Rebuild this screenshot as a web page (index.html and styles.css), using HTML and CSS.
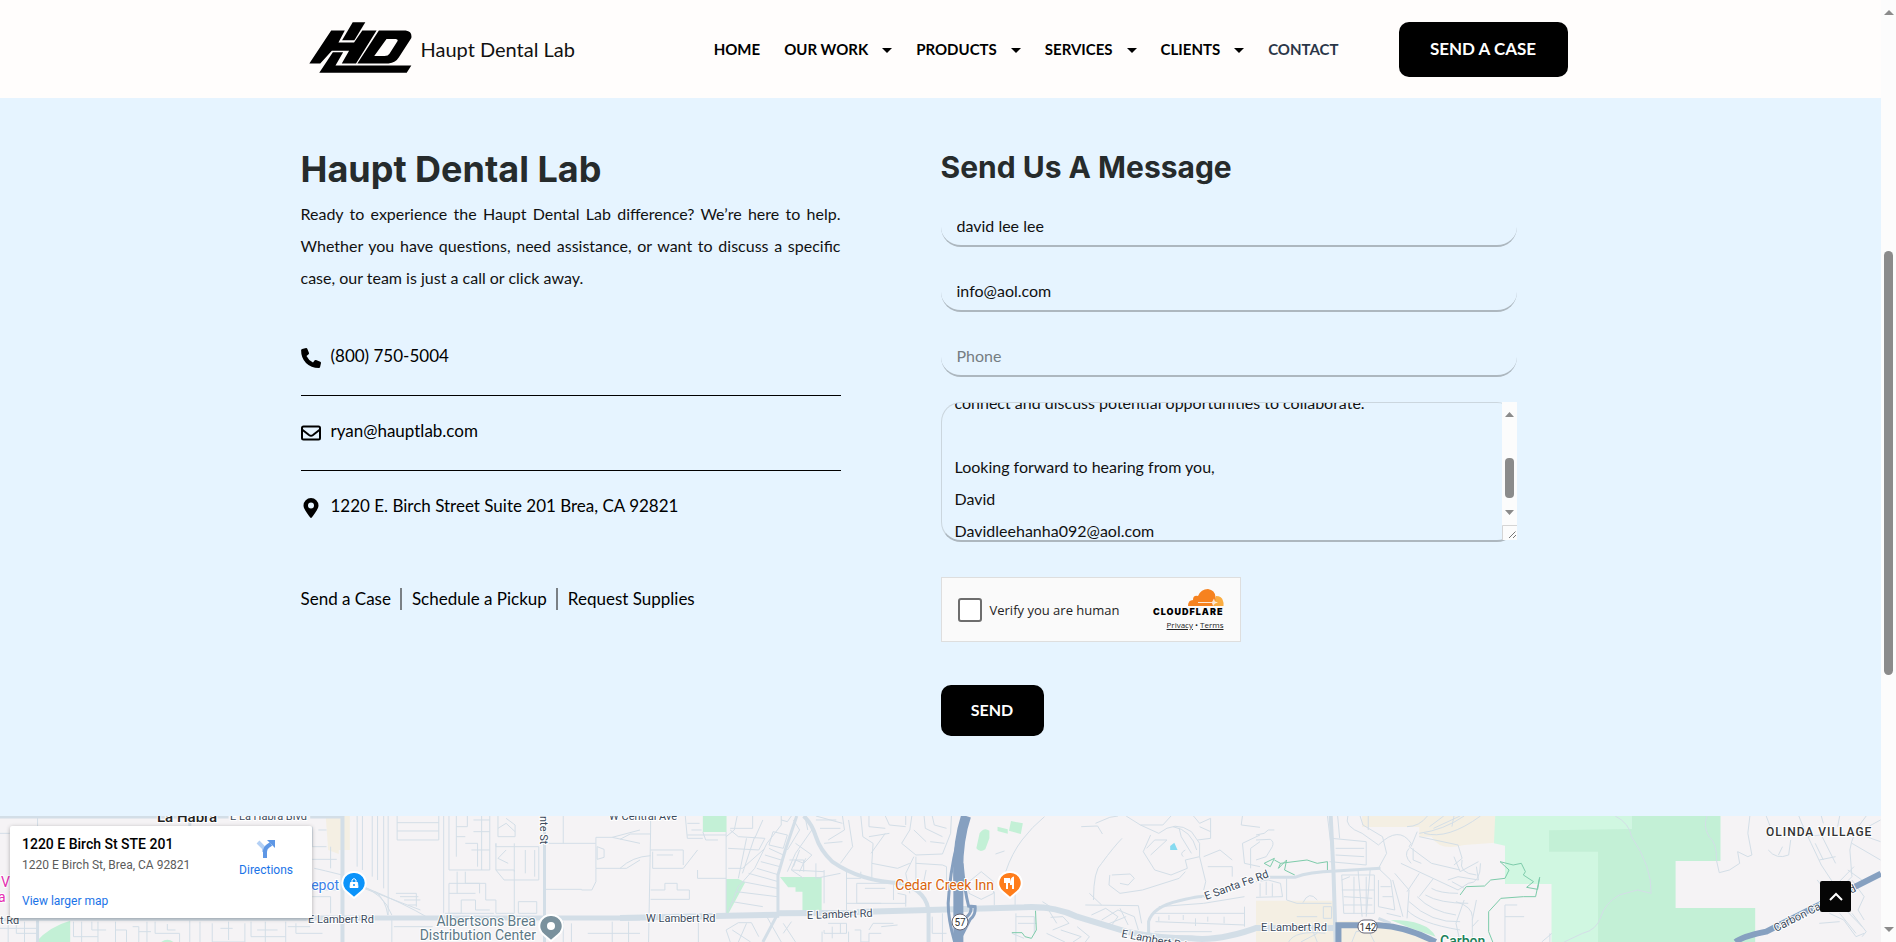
FILE: index.html
```html
<!DOCTYPE html>
<html lang="en">
<head>
<meta charset="utf-8">
<title>Contact - Haupt Dental Lab</title>
<link rel="stylesheet" href="styles.css">
</head>
<body>
<div class="window">
<div class="page">
  <header class="site-header">
    <div class="container header-row">
      <a class="logo" href="#">
        <svg class="logo-mark" viewBox="27 24 309 154" aria-hidden="true">
          <path d="M158 25H196L163 79H126Z"/>
          <path d="M93 50H134L115 86H162L187 50H230L168 149H125L147 111H95L60 149H27Z"/>
          <path fill-rule="evenodd" d="M237 50H318Q338 53 335 72L298 130Q288 147 266 149H172ZM260 75L223 127H254Q265 127 269 120L292 84Q297 76 288 75Z"/>
          <path d="M98 115H129L106 155H335L321 177H57Z"/>
        </svg>
        <span class="logo-text">Haupt Dental Lab</span>
      </a>
      <nav class="nav">
        <a href="#">HOME</a>
        <a href="#" class="has-menu">OUR WORK</a>
        <a href="#" class="has-menu">PRODUCTS</a>
        <a href="#" class="has-menu">SERVICES</a>
        <a href="#" class="has-menu">CLIENTS</a>
        <a href="#" class="current">CONTACT</a>
      </nav>
      <a class="button case-button" href="#">SEND A CASE</a>
    </div>
  </header>

  <main class="contact">
    <div class="container columns">
      <section class="info">
        <h1>Haupt Dental Lab</h1>
        <p class="intro">Ready to experience the Haupt Dental Lab difference? We’re here to help. Whether you have questions, need assistance, or want to discuss a specific case, our team is just a call or click away.</p>
        <ul class="details">
          <li><a href="#"><svg viewBox="0 0 20 20" aria-hidden="true"><path d="M1.200 0.900 5.100 0Q5.900-.1 6.300.7L8 5Q8.200 5.700 7.600 6.300L5.500 8Q7.500 12.300 12 14.500L13.700 12.300Q14.200 11.800 15 12L19.300 13.800Q20.100 14.200 20 15L19.100 18.900Q18.900 19.900 17.900 20Q10 20 5 15Q0 10 .1 2.100Q.1 1.100 1.200.9Z"/></svg><span>(800) 750-5004</span></a></li>
          <li><a href="#"><svg viewBox="0 0 20 20" aria-hidden="true"><rect x="1" y="3.500" width="18" height="13" rx="1.500" fill="none" stroke="#000" stroke-width="2"/><path d="M1 6.500 8 12Q10 13.500 12 12L19 6.500" fill="none" stroke="#000" stroke-width="2"/></svg><span>ryan@hauptlab.com</span></a></li>
          <li><a href="#"><svg viewBox="0 0 20 20" aria-hidden="true"><path fill-rule="evenodd" d="M10 0A7.500 7.500 0 0 1 17.500 7.500C17.500 11 13 16.500 10.800 19.500Q10 20.300 9.200 19.500C7 16.500 2.500 11 2.500 7.500A7.500 7.500 0 0 1 10 0ZM10 4.500A3 3 0 1 0 10 10.500A3 3 0 1 0 10 4.500Z"/></svg><span>1220 E. Birch Street Suite 201 Brea, CA 92821</span></a></li>
        </ul>
        <div class="quick-links">
          <a href="#">Send a Case</a>
          <a href="#">Schedule a Pickup</a>
          <a href="#">Request Supplies</a>
        </div>
      </section>

      <section class="message">
        <h2>Send Us A Message</h2>
        <form class="form">
          <input type="text" aria-label="Name" value="david lee lee">
          <input type="email" aria-label="Email" value="info@aol.com">
          <input type="tel" aria-label="Phone" placeholder="Phone">
          <div class="message-box">
            <textarea id="message" aria-label="Message">connect and discuss potential opportunities to collaborate.

Looking forward to hearing from you,
David
Davidleehanha092@aol.com</textarea>
            <div class="area-scroll" aria-hidden="true">
              <svg viewBox="0 0 15 138">
                <path d="M0 0H15V138H0Z" fill="#fcfcfc"/>
                <path d="M3 15 7.500 10 12 15ZM3 108H12L7.500 113Z" fill="#8b8b8b"/>
                <rect x="3" y="56" width="9" height="40" rx="4" fill="#8b8b8b"/>
                <path d="M.5 138V123.500H15" fill="none" stroke="#d5d5d5"/>
                <path d="M7 136 13.500 129.500M11 136 14 133" fill="none" stroke="#777"/>
              </svg>
            </div>
          </div>
          <div class="captcha">
            <label class="verify"><input type="checkbox">Verify you are human</label>
            <div class="brand">
              <svg class="cloud" viewBox="0 0 36 17" aria-hidden="true">
                <path fill="#fbad41" d="M25 17 28 7Q34 7 35 12Q36 14 35.500 17Z"/>
                <path fill="#f6821f" d="M0 17Q0 11 5 11Q5 6 10 7Q13 0 20 0Q27 1 27.500 8Q28 13 25 17Z"/>
                <path d="M10 13H24L26 9.500 27 12.500 30 13.500 27 14.500 25 17 24 14H10Z" fill="#fff" opacity=".8"/>
              </svg>
              <span class="brand-name">CLOUDFLARE</span>
              <span class="terms"><a href="#">Privacy</a> • <a href="#">Terms</a></span>
            </div>
          </div>
          <button class="button send-button" type="submit">SEND</button>
        </form>
      </section>
    </div>
  </main>

  <section class="map" aria-label="Map">
    <svg class="map-canvas" viewBox="0 816 1881 126" preserveAspectRatio="xMinYMin slice">
      <rect y="816" width="1881" height="126" fill="#f5f3f5"/>
      <g class="layer" transform="translate(0 800) scale(.408163 .333333)">
        <path class="sand" d="M798 48H857V150H830V162L804 150Z"/>
        <path class="park" d="M88 426Q120 380 172 362V426ZM395 426Q410 412 425 426Z"/>
        <path class="street" d="M0 100H24M92 48V426M465 354V426M180 365V410H240M200 365V426M240 365V426M283 365V426M283 390H310V426M325 380H340V426M360 365V426M380 365V400H440V426M490 365V426M520 370V426H600V370M560 365V420M615 365V410H700M650 365V426M700 365V426M725 370V400H790M765 80V140H800M780 90H800M810 140V205M765 178H825M770 205Q790 210 838 225M875 48V200M888 48V210M912 48V230M925 48V240M940 48V265M951 48V345M973 48V120H1075V48M973 68H1075M973 93H1075M880 255Q940 280 960 345M890 260Q990 310 1050 354M885 262 1030 330M920 275Q945 300 950 345M960 360V426M1087 48V340M1100 48V210H1200V48M1118 48V170M1118 80H1145V48M1118 110H1140M1140 130H1170V200M1160 60H1200M1160 95H1200M1155 150H1200M1180 48V210M1220 48V110H1262V75L1240 55M1220 85 1240 70 1262 95M1215 130V210L1235 240H1320V140H1215ZM1240 150 1220 175 1245 190M1260 130V215M1287 150V220M1310 150V230M1215 210H1260V340H1215V300H1190V250H1100V340H1130V300H1165V330H1200M1100 280H1165M1120 215V280M1140 215V250H1175V280M1270 305H1315V340H1270ZM1330 130H1460V205H1535L1568 180M1460 130V112H1500L1568 130M1463 140V178L1480 172V148L1463 140M1500 112 1568 90M1380 130V48M1337 268H1425V270H1450L1460 245V205M970 280H1020V320M980 290H1025M990 300H1030M1000 315H1020M1090 340H1210M965 380H1060M1380 365V426M1400 370V426M1440 400H1568M1500 365V426M1540 365V426"/>
        <path class="street" d="M225 365V390H260M340 395H370M410 372V390H430M540 385H570M630 390H680M705 380H760M765 270H835M765 290H810V340M0 385H92M20 370V426M40 365V400H92M60 365V426"/>
        <path class="road r8" d="M839 48V426"/><path class="road r5" d="M1334 48V426M465 48V78M92 354V426"/>
        <path class="road r6" d="M0 51H560M760 51H838M0 358H750"/><path class="road r9" d="M750 354H1568"/>
      </g>
      <g class="layer" transform="translate(620 800) scale(.408163 .333333)">
        <path class="park" d="M203 48H261V96H203ZM260 237H290L307 247 266 340H260ZM392 231H494V332H447V275H430V262H412ZM873 145 881 100Q892 80 905 92V115L895 148Q882 160 873 145ZM925 80 950 88V101L925 93ZM958 63 987 70 982 102 953 92Z"/>
        <path fill="#86daf0" d="M1348 138 1358 128 1366 150H1348Z"/>
        <path class="street" d="M75 48V90L70 426M0 118 25 102H75M0 205Q30 170 75 167M75 150H155V195M80 155V205H155L190 150M90 165H130M160 48 165 115H203M165 70H195M175 90H200M165 105H260V96M203 96 210 120H240M190 210V235H260M75 270H110V250H140V270H170V298H75M192 340V426M260 105V340M265 145 340 150 355 115 290 110 270 90M287 48 280 90 260 110M395 48V75L360 130 330 205 290 260 265 335M325 48V85H270M355 145 300 205H265M310 115 290 235M330 110 300 220M350 60 330 115M425 60 440 90 410 150M395 60 410 65 420 48M375 95 410 105 400 145 365 135ZM365 145 400 165M355 165 395 180M345 185 392 200M335 205 390 225M315 220 388 245M300 245 385 265M285 275 385 290M275 305 350 320M430 130 470 165 450 190 430 180 420 210 500 215M415 180H450V215M440 150 425 200M455 175 440 215M420 210 450 235M480 190V235L540 220M500 210V310M470 90 430 160 410 215M455 60 460 90M545 48 550 90 510 120M560 60 570 140 540 190M480 60H530M490 85H540M500 130 545 125M610 48V80L650 85M590 48 595 110 620 130M620 130 617 190 680 205 710 190M617 190V235M650 48 660 75 700 80M700 48V75M715 48 710 90 690 130 725 165 790 162 810 100 812 48M745 48 748 85 790 110M765 48 770 75 800 85M760 125 795 130M720 170 700 220 710 280M725 170V250M750 210 740 270M725 190 790 195 800 200V270M580 250V310H640M555 215V340M555 235H590V215M580 250H670V300M600 265H650M555 310H700V285L680 280M700 285V320M720 90 750 125M480 48 545 70M650 100 615 160M660 100 610 110M790 340V426M755 350V426M765 350V400H800M510 370H555V400H500V390M520 380V415M540 370V400M495 395V426M560 395V426M575 390H590V426H610V400H640M610 390 620 370H670M640 380 680 375M270 426 260 390 290 368H322L340 410M275 390 320 426M310 370 290 426M355 340 395 426M400 400 420 365M400 370 430 426"/>
        <path class="street" d="M885 215 915 245V280L885 298 855 280V245ZM917 275V315M968 270V315M945 215Q960 160 985 120T1040 50M920 162 942 153M1230 115Q1210 140 1180 190Q1160 210 1160 300M1180 315 1150 280M1130 80 1170 78 1182 102M1165 70 1200 52 1220 48M1240 48 1275 75H1330L1350 48M1275 75 1320 100Q1360 60 1400 95L1420 130V170L1435 245M1300 105 1282 155 1310 210 1350 225 1390 205 1385 180 1420 170M1290 145 1310 120 1340 120 1300 165M1355 80Q1400 90 1413 150M1370 85 1375 110 1400 160M1380 170Q1370 160 1385 150M1405 48 1420 70 1447 55V115L1415 120M1447 95 1420 80M1525 48 1522 75 1568 82M1568 105 1525 130 1530 190 1568 200M1568 125 1545 145V205M1205 225 1250 222 1260 235 1245 255 1225 250M1200 225 1198 255 1225 280 1280 270 1370 235 1385 215M1430 170 1470 150 1500 180M1440 200H1500V230M1435 245 1430 270M1140 315 1270 317 1278 370M1155 345 1190 325 1220 350 1205 375M1180 360 1220 330 1260 350 1270 390M1190 375 1240 350M1225 325 1245 375M1310 340H1530M1312 365 1530 375M1320 350V363M1345 345V360M1380 345V360M1410 355V378M1440 350V365M1480 350V370M1530 320V380M1320 320 1430 310 1530 290M1310 395H1450M1350 410H1500M970 350H1015V400M975 370H1020M970 340V426M960 400 990 415M1020 330H1050L1070 370M1060 390 1100 370 1085 350 1055 352M1045 400 1090 426M1080 390 1130 410 1110 426M1120 380 1150 410 1140 426M1035 305 1080 340"/>
        <path class="trail" d="M1018 332 1020 390 1008 415 992 410 985 398 960 398"/>
        <path class="road r5" d="M433 48 405 150 387 225V345M387 340 350 426"/><path class="road r7" d="M450 48Q470 70 480 110T520 185Q590 245 690 250M690 250Q755 275 756 340V426"/>
        <path class="road r10" d="M0 354 390 344M390 340 580 338M580 336 990 322Q1060 317 1120 350L1240 395Q1320 415 1400 415 1470 425 1568 380"/><path class="road r5" d="M1295 405V365Q1305 320 1370 302T1430 292"/>
        <path class="freeway thin" d="M826 130Q808 220 804 310Q804 360 820 426M838 190Q844 270 854 318L870 320Q872 345 858 358L838 405M858 318Q866 338 840 360"/>
        <path class="freeway" d="M848 48Q825 130 829 250V426"/>
      </g>
      <g class="layer" transform="translate(1256 800) scale(.408163 .333333)">
        <path class="sand" d="M260 48H586V128L510 135Q450 155 430 110H400V81H260ZM0 302H190V365Q360 350 440 426H0Z"/>
        <path fill="#d0f7e1" d="M586 48H921V426H724V252H610V137L583 130Z"/><path class="park" d="M921 48H1138V183H1028V324H1223V426H838V155H718V91L921 87ZM330 360Q420 360 440 410L380 385Z"/>
        <path class="street" d="M0 105 20 100 30 90H45M0 120 35 118Q45 125 40 140L25 170 0 180M0 245 30 240 60 250 65 290 0 292M10 250V290M25 245V285M40 250V290M75 235V300L100 310H185M115 308Q130 270 150 300M185 115 270 125V195L180 185M195 145H265M195 165 265 170M175 48 190 200M200 48 205 115M225 48Q215 80 260 100L300 135Q350 75 380 130L375 140 430 190 500 210M255 48 262 75 310 110 320 160 300 205M275 48V90M375 145Q360 165 380 190M385 145V180L405 190M395 95 380 140M400 110 495 135 505 175 485 195M370 80Q400 80 420 48M400 100Q460 90 510 48M412 100Q470 120 550 48M425 80 460 48M435 85 500 48M485 48 480 80M485 170 500 215 545 185M540 200 545 240 495 230 470 240M505 180Q495 220 540 225M550 190Q550 250 520 250L495 270 355 190M340 220 375 270 370 355M335 240 360 350M400 220 370 275M435 235 400 290M480 245 510 265M395 290Q430 335 490 345M375 305Q430 370 500 365M415 285Q450 310 520 310M370 330Q400 370 500 390M430 265Q450 280 495 280M490 305Q530 320 530 350V426M540 300 530 360M545 360 530 380M510 300 490 370 500 426M280 205 270 350M250 210 260 350M210 225H290V340H215ZM210 240 230 230M210 270H290M240 230V340M270 230V340M215 290 285 295M215 315H285M300 205 330 240 340 330 300 320V240M305 260H330M310 290H335M320 340 355 350M165 320H185V355H165ZM610 426V315H640M610 350H657M720 400V426M700 426 725 400M880 48Q915 70 920 110Q970 200 968 280L935 270 890 285Q855 310 845 350T800 400L755 426M1105 48Q1095 80 1110 110 1130 130 1128 180L1135 218 1160 210 1185 190 1180 155 1205 170 1215 165 1205 100 1210 48M1250 48 1260 80M1255 150Q1275 180 1305 165L1310 120M1280 165 1290 140M1330 48Q1340 80 1360 130L1385 195 1420 260M1345 110 1385 105 1420 190M1370 130 1390 180M1380 180 1420 170M1385 48 1390 70M1430 48 1425 80M1495 48Q1460 100 1455 150L1460 230 1420 280M1530 125 1495 110 1500 80 1530 60M1460 130 1530 180M1450 210 1490 245M1465 200 1425 250M1375 240 1400 280M1460 240 1490 290 1475 330 1490 360M1460 340 1495 395 1485 410M1405 340 1440 360 1470 410 1490 400M1430 340 1470 400M1380 370 1430 365M1445 330 1485 380"/>
        <path class="street" d="M80 426Q95 390 170 400M110 426 150 400M150 426 140 395M235 426 245 395 275 390 290 426M100 350H150"/>
        <path class="trail" d="M20 190 45 175 35 200ZM45 180 60 190 55 205 75 180 70 210 95 225M60 190 125 180 150 190 175 185V212M500 285 515 260 560 258 575 240 610 235 620 210 598 185 630 195 650 190 660 215 655 225 680 245 663 262 690 268 695 232 685 290H655L600 295 570 335V395L580 426"/>
        <path class="road r8" d="M183 48 190 220 195 426"/><path class="road r5" d="M20 232H95Q130 215 195 213L305 205M300 355 330 370"/>
        <path class="road r10" d="M0 384H190"/>
        <path class="freeway highway" d="M202 426V376H300Q370 380 440 426M1175 426Q1190 410 1250 395L1531 221"/>
      </g>
      <g class="labels">
        <text x="157" y="822" class="town">La Habra</text><text x="230" y="820">E La Habra Blvd</text><text x="609" y="820">W Central Ave</text>
        <text transform="translate(540 816) rotate(90)">nte St</text>
        <text x="308" y="923">E Lambert Rd</text><text x="0" y="924">t Rd</text><text x="646" y="922">W Lambert Rd</text><text x="807" y="919" transform="rotate(-2 807 919)">E Lambert Rd</text>
        <text x="1261" y="931">E Lambert Rd</text><text transform="translate(1121 937) rotate(11)">E Lambert Rd</text><text transform="translate(1206 900) rotate(-20)">E Santa Fe Rd</text><text transform="translate(1776 932) rotate(-27)">Carbon Canyon Rd</text>
        <text x="1766" y="836" class="village">OLINDA VILLAGE</text>
        <text x="1440" y="946" class="poi green">Carbon</text>
        <text x="339" y="890" class="poi blue" text-anchor="end">Home Depot</text><text x="1" y="887" class="poi pink">V</text><text x="-2" y="902" class="poi pink">a H</text>
        <text x="536" y="926" text-anchor="end" class="poi grey">Albertsons Brea</text><text x="536" y="940" text-anchor="end" class="poi grey">Distribution Center</text>
        <text x="994" y="890" text-anchor="end" class="poi orange">Cedar Creek Inn</text>
      </g>
      <g stroke="#fff" stroke-width="2">
        <path fill="#0b93fa" d="M354 872A11 11 0 0 1 361 892L354 898 347 892A11 11 0 0 1 354 872Z"/>
        <path fill="#ff7d1b" d="M1010 872A11 11 0 0 1 1017 892L1010 898 1003 892A11 11 0 0 1 1010 872Z"/>
        <path fill="#7a919d" d="M551 915A11 11 0 0 1 558 935L551 941 544 935A11 11 0 0 1 551 915Z"/>
      </g>
      <circle cx="551" cy="926" r="4" fill="#fff"/>
      <path d="M350.500 882.500H357.500L358 887.500H350Z" fill="#fff" stroke="#fff"/><path d="M352 882V880Q354 877 356 880V882" fill="none" stroke="#fff"/><circle cx="354" cy="885" r="1" fill="#0b93fa"/>
      <path d="M1005 878V882H1009V878M1007 878V889M1013 889V878Q1011 879 1011 884H1013" fill="none" stroke="#fff" stroke-width="2"/>
      <g class="shield"><circle cx="960" cy="922" r="8"/><rect x="1358" y="920" width="19" height="13" rx="6"/><text x="960" y="926">57</text><text x="1368" y="931">142</text></g>
    </svg>
    <div class="place-card">
      <div class="place-text">
        <strong>1220 E Birch St STE 201</strong>
        <span>1220 E Birch St, Brea, CA 92821</span>
        <a href="#">View larger map</a>
      </div>
      <a class="directions" href="#">
        <svg viewBox="0 0 20 20" aria-hidden="true"><path d="M2 3 8 9V13" fill="none" stroke="#b3d0f5" stroke-width="4"/><path d="M9 19V13Q9 9 12 7L15 5" fill="none" stroke="#5e97e5" stroke-width="4"/><path d="M11 1H19V9Z" fill="#5e97e5"/></svg>
        Directions
      </a>
    </div>
    <button class="to-top" aria-label="Back to top"><svg viewBox="0 0 14 9"><path d="M1 8 7 2 13 8" fill="none" stroke="#fff" stroke-width="2"/></svg></button>
  </section>
</div>
<div class="scrollbar" aria-hidden="true">
  <i class="arrow up"></i><i class="thumb"></i><i class="arrow down"></i>
</div>
</div>
<script src="script.js"></script>
</body>
</html>
```
FILE: styles.css
```css
* { box-sizing: border-box; }
body { margin: 0; background: #fcfcfc; color: #111; font: 16px/32px Lato, "Liberation Sans", sans-serif; }
a { color: inherit; text-decoration: none; }
.window { display: grid; grid-template-columns: minmax(0, 1fr) 15px; height: 100vh; overflow: hidden; }
.page { display: flex; flex-direction: column; min-height: 0; }
.container { width: 100%; max-width: 1280px; margin: 0 auto; }

.site-header { background: #fffdfc; padding: 22px 0 21px; }
.header-row { display: flex; align-items: center; padding: 0 13px 0 8px; }
.logo { display: flex; align-items: center; gap: 9px; margin: 0 auto 4px 0; }
.logo-mark { width: 103px; height: 51px; }
.logo-text { padding-top: 2px; font-size: 20px; white-space: nowrap; color: #111; }
.nav { display: flex; gap: 24px; margin-right: 60px; padding-bottom: 2px; font-size: 15px; font-weight: 700; color: #000; }
.nav a { white-space: nowrap; line-height: 24px; }
.has-menu::after { content: ""; display: inline-block; margin: 0 0 2px 14px; border: 5px solid transparent; border-top-color: #000; border-bottom: 0; }
.nav .current { color: #2b3648; }
.button { display: block; border: 0; border-radius: 10px; background: #000; color: #fff; font-family: inherit; font-size: 16px; font-weight: 700; text-align: center; }
.case-button { width: 169px; padding-bottom: 2px; font-size: 17px; line-height: 53px; }

.contact { background: #e6f4ff; flex: none; height: 718px; padding-top: 49px; }
.columns { display: grid; grid-template-columns: 1fr 1fr; }
.info { padding-right: 100px; }
h1, h2 { margin: 0; font-family: Inter, Lato, sans-serif; font-weight: 700; color: #262b2c; }
h1 { font-size: 36px; line-height: 45px; padding-bottom: 6px; }
h2 { font-size: 30px; line-height: 40px; padding-bottom: 18px; }
.intro { margin: 0; text-align: justify; }
.details { list-style: none; margin: 0; padding: 27px 0 0; color: #000; font-size: 17px; }
.details li { border-bottom: 1px solid #000; padding: 20px 0 21px; }
.details li:last-child { border: 0; }
.details a { display: flex; align-items: center; gap: 10px; line-height: 30px; }
.details span { padding-bottom: 3px; }
.details svg { width: 20px; height: 20px; overflow: visible; }
.quick-links { display: flex; padding-top: 43px; color: #000; font-size: 17px; line-height: 22px; }
.quick-links a + a { margin-left: 9px; padding-left: 10px; border-left: 2px solid #7a8085; }

.form { display: flex; flex-direction: column; width: 90%; }
.form > input { height: 42px; margin-bottom: 23px; padding: 0 16px; border: solid #adb7bf; border-width: 0 0 2px; border-radius: 20px; background: transparent; color: #111; font: 16px/24px Lato, sans-serif; outline: 0; }
.form > input::placeholder { color: #757d82; opacity: 1; }
.message-box { position: relative; height: 140px; margin-top: 2px; }
textarea { display: block; width: 100%; height: 100%; padding: 10px 28px 10px 13px; border: 1px solid #cbd6de; border-bottom: 2px solid #adb7bf; border-radius: 20px; background: transparent; color: #111; font: 16px/32px Lato, sans-serif; resize: none; overflow: hidden; outline: 0; }
.area-scroll { position: absolute; top: 0; right: 0; width: 15px; height: 138px; }
.area-scroll svg { display: block; }
.captcha { display: flex; justify-content: space-between; align-items: center; width: 300px; height: 65px; margin: 35px 0 43px; padding: 0 16px; border: 1px solid #dedede; background: #fafafa; }
.verify { display: flex; align-items: center; gap: 8px; font: 13px/20px "Open Sans", sans-serif; color: #232323; }
.verify input { appearance: none; width: 24px; height: 24px; margin: 0; border: 2px solid #6d6d6d; border-radius: 3px; background: #fff; }
.brand { display: flex; flex-direction: column; align-items: flex-end; padding-top: 2px; }
.cloud { width: 36px; height: 17px; }
.brand-name { font: 900 9px/12px Inter, sans-serif; letter-spacing: 1px; color: #000; }
.terms { font: 8px/14px "Open Sans", sans-serif; color: #232323; }
.terms a { text-decoration: underline; }
.send-button { width: 103px; height: 51px; padding: 0 0 2px; }

.map { position: relative; flex: 1; min-height: 0; overflow: hidden; }
.map-canvas { display: block; width: 100%; height: 100%; font-family: Roboto, sans-serif; }
.layer path { vector-effect: non-scaling-stroke; }
.street, .road, .trail, .freeway { fill: none; stroke: #d3dee7; stroke-width: 1px; }
.trail { stroke: #7dcbaa; }
.freeway { stroke: #86a0c0; stroke-width: 10px; }
.thin { stroke-width: 3px; }
.highway { stroke-width: 6px; }
.r5, .r6 { stroke-width: 3px; }
.r7, .r8 { stroke-width: 4px; }
.r9 { stroke-width: 5px; }
.r10 { stroke-width: 6px; }
.park { fill: #c3f0d6; }
.sand { fill: #f4efe3; }
.labels text { fill: #3b4a5c; stroke: #fff; stroke-width: 2px; paint-order: stroke; font-size: 11px; }
.labels .town { font-size: 15px; font-weight: 500; fill: #222; }
.labels .village { font-size: 12px; font-weight: 500; letter-spacing: 1px; fill: #333; }
.labels .poi { font-size: 14px; }
.labels .blue { fill: #3c7fe8; }
.labels .pink { fill: #e52eb2; }
.labels .grey { fill: #5c7886; }
.labels .orange { fill: #d9640c; }
.labels .green { fill: #188058; font-weight: 500; }
.shield { fill: #fff; stroke: #667; }
.shield text { fill: #333; stroke: none; font-size: 10px; text-anchor: middle; }
.place-card { position: absolute; top: 10px; left: 10px; display: flex; justify-content: space-between; width: 302px; height: 92px; padding: 8px 19px 0 12px; background: #fff; border-radius: 2px; box-shadow: 0 1px 4px rgba(0, 0, 0, .3); font: 12px/20px Roboto, sans-serif; }
.place-text { display: flex; flex-direction: column; color: #5b5b5b; }
.place-text strong { font-size: 14px; font-weight: 500; line-height: 20px; color: #000; }
.place-text span { line-height: 22px; }
.place-text a { margin-top: 15px; line-height: 20px; color: #1a73e8; }
.directions { display: flex; flex-direction: column; align-items: center; padding-top: 5px; color: #1a73e8; line-height: 22px; }
.directions svg { width: 20px; height: 20px; }
.to-top { position: absolute; top: 65px; right: 30px; display: grid; place-items: center; width: 31px; height: 31px; padding: 0; border: 0; border-radius: 2px; background: #050505; }
.to-top svg { width: 14px; height: 9px; }

.scrollbar { display: flex; flex-direction: column; align-items: center; padding: 10px 0; background: #fcfcfc; }
.arrow { border: 5px solid transparent; }
.up { border-top: 0; border-bottom-color: #8b8b8b; }
.down { border-bottom: 0; border-top-color: #8b8b8b; margin-top: auto; }
.thumb { width: 9px; height: 46%; margin-top: 236px; border-radius: 5px; background: #8b8b8b; }
```
FILE: script.js
```js
document.getElementById("message").scrollTop = 26;
```
